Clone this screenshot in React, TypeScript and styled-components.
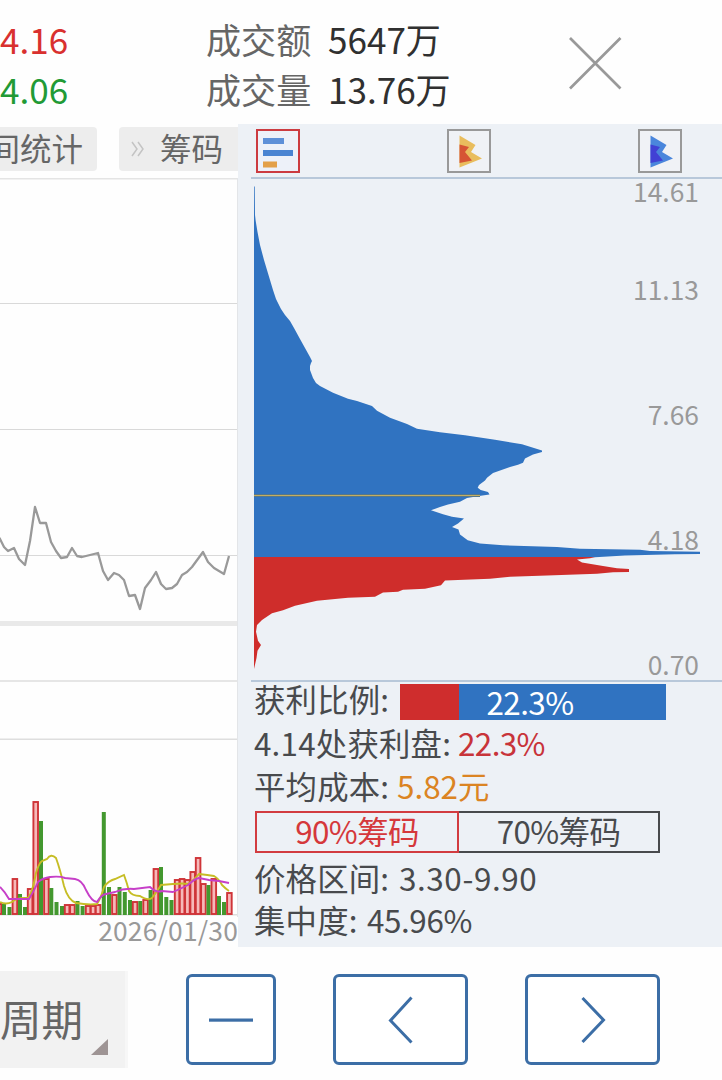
import React from 'react';
import styled, { createGlobalStyle } from 'styled-components';

const GlobalStyle = createGlobalStyle`
  * { box-sizing: border-box; }
  body {
    margin: 0;
    background: #fefefe;
    font-family: "Noto Sans CJK SC", "Noto Sans", sans-serif;
    overflow: hidden;
  }
  svg { display: block; }
`;

const Screen = styled.div`
  width: 722px;
  height: 1080px;
  display: flex;
  flex-direction: column;
  overflow: hidden;
`;

const Header = styled.header`
  height: 124px;
  flex: none;
  display: grid;
  grid-template-columns: 206px 122px 240px 1fr;
  grid-template-rows: 50px 50px;
  padding-top: 14px;
  font-size: 35.1px;
  line-height: 50px;
  white-space: nowrap;
`;

const Quote = styled.span<{ $color: string }>`
  color: ${(p) => p.$color};
`;

const CloseButton = styled.button`
  grid-column: 4;
  grid-row: 1 / span 2;
  border: 0;
  background: none;
  padding: 22px 0 0;
  display: flex;
  align-items: flex-start;
`;

const Main = styled.main`
  height: 823px;
  flex: none;
  display: flex;
`;

const TrendPane = styled.section`
  width: 238px;
  display: flex;
  flex-direction: column;
`;

const Tabs = styled.nav`
  height: 54px;
  flex: none;
  display: flex;
  gap: 22px;
  padding-top: 3px;
`;

const Tab = styled.div<{ $width: number; $open?: boolean }>`
  width: ${(p) => p.$width}px;
  height: 44px;
  flex: none;
  display: flex;
  align-items: center;
  justify-content: flex-end;
  gap: 15px;
  padding-right: ${(p) => (p.$open ? 15 : 14)}px;
  border-radius: ${(p) => (p.$open ? '4px 0 0 4px' : '0 4px 4px 0')};
  background: #ededed;
  color: #666;
  font-size: 31.5px;
  line-height: 41px;
  white-space: nowrap;
  overflow: hidden;
`;

const TabText = styled.span`
  height: 44px;
`;

const DateLabel = styled.div`
  height: 30px;
  color: #999;
  font-size: 26.4px;
  line-height: 25px;
  text-align: right;
  letter-spacing: 0.2px;
`;

const ChipPane = styled.section`
  width: 484px;
  background: #edf1f6;
  display: flex;
  flex-direction: column;
`;

const ModeBar = styled.div`
  height: 53px;
  flex: none;
  display: flex;
  gap: 147px;
  padding: 5px 0 0 18px;
`;

const ModeButton = styled.button<{ $active?: boolean }>`
  width: 44px;
  height: 44px;
  flex: none;
  padding: 0;
  border: 2px solid ${(p) => (p.$active ? '#cc3b40' : '#999')};
  background: ${(p) => (p.$active ? '#edf1f9' : '#f0f2f6')};
`;

const Stats = styled.div`
  display: flex;
  flex-direction: column;
  padding-left: 16px;
  padding-top: 1px;
  color: #484a4d;
  font-size: 31.4px;
`;

const StatRow = styled.div<{ $height: number; $lift: number }>`
  height: ${(p) => p.$height}px;
  display: flex;
  line-height: ${(p) => p.$height - p.$lift * 2}px;
  white-space: nowrap;
`;

const Label = styled.span<{ $width: number }>`
  width: ${(p) => p.$width}px;
  flex: none;
  letter-spacing: 0.2px;
`;

const Value = styled.span<{ $color?: string; $spacing?: number }>`
  color: ${(p) => p.$color ?? 'inherit'};
  letter-spacing: ${(p) => p.$spacing ?? 0}px;
`;

const RatioBar = styled.div`
  width: 266px;
  height: 36px;
  line-height: 35px;
  text-align: center;
  color: #fff;
  letter-spacing: -0.6px;
  padding-right: 6px;
  background: linear-gradient(to right, #cf2d2d 59px, #3073c1 59px);
`;

const RangeTabs = styled.div`
  display: flex;
  height: 42px;
  margin-left: 1px;
`;

const RangeTab = styled.button<{ $active?: boolean }>`
  width: ${(p) => (p.$active ? 204 : 201)}px;
  height: 42px;
  padding: 0 0 2px;
  border: 2px solid ${(p) => (p.$active ? '#d23c40' : '#484a4d')};
  border-left-width: ${(p) => (p.$active ? 2 : 0)}px;
  background: transparent;
  color: ${(p) => (p.$active ? '#d5383b' : '#484a4d')};
  font: inherit;
  line-height: 36px;
  letter-spacing: -0.6px;
`;

const Footer = styled.footer`
  flex: 1;
  display: flex;
  align-items: flex-start;
  padding-top: 24px;
`;

const Period = styled.div`
  width: 128px;
  height: 97px;
  display: flex;
  justify-content: flex-end;
  align-items: flex-end;
  padding: 0 17px 13px 0;
  border-right: 3px solid #f7f7f7;
  background: #f2f2f2;
  color: #666;
  font-size: 41.5px;
  line-height: 74px;
  white-space: nowrap;
`;

const PeriodText = styled.span`
  margin-right: 8px;
`;

const NavButton = styled.button<{ $width: number; $gap: number }>`
  width: ${(p) => p.$width}px;
  height: 91px;
  margin-left: ${(p) => p.$gap}px;
  margin-top: 3px;
  padding: 0;
  display: flex;
  align-items: center;
  justify-content: center;
  border: 3px solid #3c6ea6;
  border-radius: 6px;
  background: #fff;
`;

const GRID = [303.5, 429.5, 555.5];

const PRICE =
  '-2,536 0,539 4,547 8,551 14,548 19,559 25,565 30,541 35,507 40,523 46,523 51,542 56,551 61,558 67,557 72,548 77,556 82,557 98,553 103,571 108,580 114,573 119,575 124,580 129,596 135,595 140,609 145,588 151,580 156,572 161,584 166,589 172,588 177,584 182,575 187,572 192,567 203,552 208,562 214,568 224,574 229,556';

type Bar = [number, number, 'r' | 'g'];
const VOLUME: Bar[] = [
  [-1, 904, 'r'], [4, 904, 'g'], [9.5, 907, 'g'], [14.8, 879, 'r'], [20, 894, 'g'], [25, 907, 'g'],
  [30, 889, 'r'], [35.6, 802, 'r'], [41, 821, 'g'], [46.3, 879, 'r'], [51.3, 888, 'g'], [56.5, 902, 'g'],
  [62, 906, 'g'], [67, 905, 'r'], [72.3, 905, 'r'], [77.5, 901, 'g'], [82.6, 906, 'g'], [88, 906, 'r'],
  [93, 906, 'r'], [98, 905, 'r'], [103.8, 812, 'g'], [109, 887, 'g'], [114.3, 895, 'r'], [119.5, 887, 'g'],
  [124.8, 892, 'g'], [130, 900, 'g'], [135, 902, 'r'], [140.3, 901, 'g'], [145.5, 900, 'r'], [150.6, 890, 'g'],
  [155.8, 869, 'r'], [161, 867, 'g'], [166.3, 897, 'g'], [171.5, 900, 'g'], [177, 880, 'r'], [182, 879, 'r'],
  [187.3, 880, 'r'], [192.6, 872, 'r'], [198, 858, 'r'], [203.3, 884, 'r'], [208.5, 885, 'g'], [213.7, 879, 'r'],
  [219, 896, 'g'], [224, 902, 'g'], [229.3, 893, 'r'],
];

const MA_YELLOW =
  'M0 902 Q6 905 12 902 Q17 897 28 898 Q32 894 36 873 Q39 863 42 861 L47 859 Q51 853 56 858 Q60 869 64 886 Q68 900 76 903 Q88 905 97 904 Q101 898 104 887 Q108 881 115 879 L124 875 Q127 883 129 891 Q132 896 140 896 Q148 901 152 898 Q158 890 161 885 L173 884 Q184 883 188 884 Q194 880 199 874 Q208 875 214 876 Q219 879 222 885 Q226 889 229 891';
const MA_PURPLE =
  'M0 887 Q5 892 9 899 L15 899 L29 899 Q35 889 38 882 Q43 878 50 877 Q60 876 65 878 L75 879 Q82 880 86 890 Q92 902 97 902 Q102 894 106 894 L115 892 Q124 888 134 889 L150 887 Q156 893 162 891 L173 892 Q180 889 188 885 Q194 879 199 878 L209 880 L219 881 L229 883';

const BLUE_AREA =
  '254,186 254.7,187 255,215 255.7,221 257.5,232 260,245 264,260 267,270 270,280 273,290 275,296 276,299 281,309 285,315 290,321 294,328 300,339 305,348 310,357 312,361 311,363 310,366 310,370 313,378 316,383 320,386 333,392.7 348,398.7 357,401 372,406 377,410.7 390,417.7 407,424 417,428.7 440,432.3 465,435.3 495,439.7 522,444.3 542,450.5 542,452 533,454.5 525,458.5 523,462.7 518,464.7 510,467 493,473 487,477.7 485,480.5 479,485 477.7,487.7 480.7,490 488,492 489.5,494.5 479,496 467,498 460,501.7 448,504.5 440,507 431,510.3 443,514.3 452,516.7 464,518.5 458,523.5 452,527 458.5,529.5 460,534.5 467.7,540.3 480,543.5 503,545.3 557,547 580,548.7 640,549.7 650,551 700,551.7 700,554 675,554.3 625,555.5 595,557.3 254,557.3';
const RED_AREA =
  '254,557 595,557 590,558.3 577,559.5 582,562.5 603,566 617,568.3 629,569 629,572 613,572.3 597,573.7 547,575.5 510,576.7 490,578.7 445,580.5 441,585.3 425,588.7 403,589.7 398,591.7 383,592.5 375,596.7 348,597.7 317,600.7 295,605.7 283,610.3 272,613.3 262,620 257,625 256,631.7 258,640.7 261,645 257.5,650.7 256.5,658 254,669';

const AXIS: [string, number][] = [
  ['14.61', 201.5], ['11.13', 300], ['7.66', 425], ['4.18', 550], ['0.70', 675],
];

function TrendChart() {
  return (
    <svg width="238" height="739" viewBox="0 178 238 739">
      <rect x="0" y="177.5" width="238" height="2" fill="#e4e4e4" />
      {GRID.map((y) => (
        <line key={y} x1="0" x2="238" y1={y} y2={y} stroke="#d9d9d9" />
      ))}
      <rect x="0" y="621" width="238" height="5" fill="#e9e9e9" />
      <rect x="0" y="680" width="238" height="2" fill="#e6e6e6" />
      <rect x="0" y="738.5" width="238" height="1.5" fill="#dedede" />
      <rect x="0" y="914" width="238" height="1.5" fill="#dedede" />
      <line x1="237.5" x2="237.5" y1="178" y2="917" stroke="#e3e5e8" />
      <polyline points={PRICE} fill="none" stroke="#999" strokeWidth="2.3" strokeLinejoin="round" />
      {VOLUME.map(([x, y, kind]) =>
        kind === 'g' ? (
          <rect key={x} x={x - 2} y={y} width="4" height={915 - y} fill="#43982f" />
        ) : (
          <rect key={x} x={x - 2.2} y={y} width="4.6" height={914 - y} fill="#f6b9b9" stroke="#cf3438" strokeWidth="1.9" />
        ),
      )}
      <path d={MA_YELLOW} fill="none" stroke="#c6bd25" strokeWidth="1.9" />
      <path d={MA_PURPLE} fill="none" stroke="#c63fc8" strokeWidth="1.9" />
    </svg>
  );
}

function ChipChart() {
  return (
    <svg width="484" height="506" viewBox="238 177 484 506">
      <rect x="251" y="177" width="471" height="2" fill="#b8c8da" />
      <rect x="251" y="680" width="471" height="2" fill="#b8c8da" />
      {AXIS.map(([text, y]) => (
        <text key={text} x="699" y={y} textAnchor="end" fontSize="26.4" fill="#999">
          {text}
        </text>
      ))}
      <polygon points={BLUE_AREA} fill="#3073c1" />
      <polygon points={RED_AREA} fill="#cf2d2b" />
      <line x1="254" x2="480" y1="495.5" y2="495.5" stroke="#55778a" strokeWidth="3" />
      <line x1="254" x2="480" y1="495.5" y2="495.5" stroke="#c4ae62" strokeWidth="1" />
    </svg>
  );
}

function FlagIcon({ outer, inner }: { outer: string; inner: string }) {
  return (
    <svg width="40" height="40" viewBox="0 0 40 40">
      <path d="M10.5 4.5 L26.5 14 L22 21 L33 27.5 L10.5 36.5 Z" fill={outer} />
      <path d="M10.5 13.5 L20 16 L16 21 L23 29.5 L10.5 32 Z" fill={inner} />
    </svg>
  );
}

export default function App() {
  return (
    <Screen>
      <GlobalStyle />
      <Header>
        <Quote $color="#d9302f">4.16</Quote>
        <Quote $color="#666">成交额</Quote>
        <Quote $color="#303030">5647万</Quote>
        <Quote $color="#219a35">4.06</Quote>
        <Quote $color="#666">成交量</Quote>
        <Quote $color="#303030">13.76万</Quote>
        <CloseButton aria-label="关闭">
          <svg width="54" height="54" viewBox="0 0 54 54">
            <path d="M2 2 L52.5 52.5 M52.5 2 L2 52.5" stroke="#999" strokeWidth="2.7" />
          </svg>
        </CloseButton>
      </Header>
      <Main>
        <TrendPane>
          <Tabs>
            <Tab $width={97}>
              <TabText>间统计</TabText>
            </Tab>
            <Tab $width={119} $open>
              <svg width="14" height="16" viewBox="0 0 14 16">
                <path d="M1 1 L6 8 L1 15 M7 1 L12 8 L7 15" fill="none" stroke="#c4c4c4" strokeWidth="1.5" />
              </svg>
              <TabText>筹码</TabText>
            </Tab>
          </Tabs>
          <TrendChart />
          <DateLabel>2026/01/30</DateLabel>
        </TrendPane>
        <ChipPane>
          <ModeBar>
            <ModeButton $active>
              <svg width="40" height="40" viewBox="0 0 40 40">
                <rect x="5" y="7" width="21" height="6" fill="#5e90d8" />
                <rect x="5" y="19" width="30" height="6" fill="#4a84d2" />
                <rect x="5" y="30.5" width="14" height="6" fill="#e3a049" />
              </svg>
            </ModeButton>
            <ModeButton>
              <FlagIcon outer="#e9bd5d" inner="#d65434" />
            </ModeButton>
            <ModeButton>
              <FlagIcon outer="#4a86dc" inner="#4141d4" />
            </ModeButton>
          </ModeBar>
          <ChipChart />
          <Stats>
            <StatRow $height={36} $lift={3}>
              <Label $width={146}>获利比例:</Label>
              <RatioBar>22.3%</RatioBar>
            </StatRow>
            <StatRow $height={49} $lift={2}>
              <Label $width={204}>4.14处获利盘:</Label>
              <Value $color="#c8343a" $spacing={-0.6}>22.3%</Value>
            </StatRow>
            <StatRow $height={42} $lift={4.5}>
              <Label $width={143}>平均成本:</Label>
              <Value $color="#db8423">5.82元</Value>
            </StatRow>
            <RangeTabs>
              <RangeTab $active>90%筹码</RangeTab>
              <RangeTab>70%筹码</RangeTab>
            </RangeTabs>
            <StatRow $height={54} $lift={2.5}>
              <Label $width={145}>价格区间:</Label>
              <Value $spacing={0.6}>3.30-9.90</Value>
            </StatRow>
            <StatRow $height={32} $lift={3}>
              <Label $width={113}>集中度:</Label>
              <Value $spacing={-0.4}>45.96%</Value>
            </StatRow>
          </Stats>
        </ChipPane>
      </Main>
      <Footer>
        <Period>
          <PeriodText>周期</PeriodText>
          <svg width="17" height="16" viewBox="0 0 17 16">
            <path d="M0 16 L17 0 V16 Z" fill="#9e9494" />
          </svg>
        </Period>
        <NavButton $width={90} $gap={58} aria-label="缩小">
          <svg width="46" height="4" viewBox="0 0 46 4">
            <rect x="1" y="0.5" width="44" height="3.2" fill="#3c6ea6" />
          </svg>
        </NavButton>
        <NavButton $width={135} $gap={57} aria-label="上一页">
          <svg width="26" height="48" viewBox="0 0 26 48">
            <path d="M23.5 1.5 L2.5 24.5 L23.5 46.5" fill="none" stroke="#3c6ea6" strokeWidth="3" />
          </svg>
        </NavButton>
        <NavButton $width={135} $gap={57} aria-label="下一页">
          <svg width="26" height="48" viewBox="0 0 26 48">
            <path d="M2.5 2 L23.5 24 L2.5 46" fill="none" stroke="#3c6ea6" strokeWidth="3" />
          </svg>
        </NavButton>
      </Footer>
    </Screen>
  );
}
